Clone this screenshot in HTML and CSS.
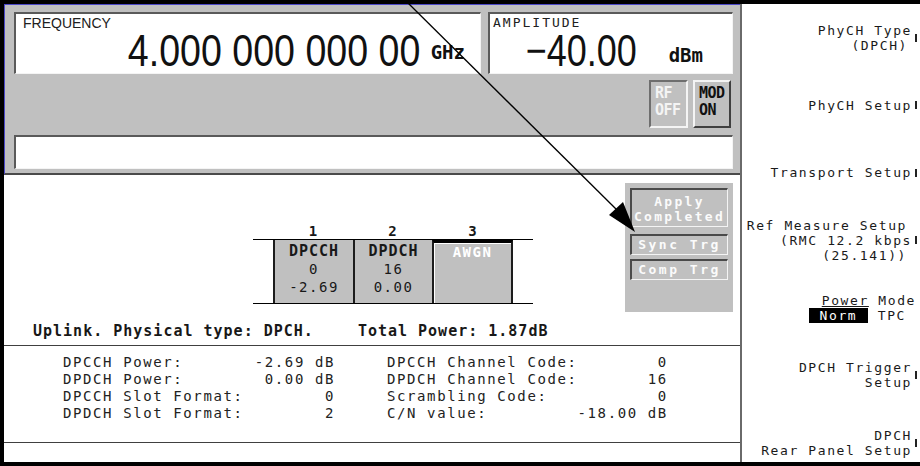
FILE: index.html
```html
<!DOCTYPE html>
<html>
<head>
<meta charset="utf-8">
<link rel="stylesheet" href="styles.css">
</head>
<body>
<div class="screen">
  <div class="main">
    <div class="left">
      <div class="top">
        <div class="readouts">
          <div class="readout freq">
            <div class="rlabel">FREQUENCY</div>
            <div class="rvalue"><span class="num">4.000 000 000 00</span><span class="unit">GHz</span></div>
          </div>
          <div class="readout amp">
            <div class="rlabel rlabel-mono">AMPLITUDE</div>
            <div class="rvalue"><span class="num">&minus;40.00</span><span class="unit">dBm</span></div>
          </div>
        </div>
        <div class="annun">
          <div class="ann ann-off">RF<br>OFF</div>
          <div class="ann ann-on">MOD<br>ON</div>
        </div>
        <div class="msgbar"></div>
      </div>

      <div class="mid">
        <div class="row-a">
          <div class="tablewrap">
            <div class="chtable">
              <div class="nums"><span class="c1">1</span><span class="c2">2</span><span class="c3">3</span></div>
              <div class="boxes">
                <div class="box c1"><b>DPCCH</b><br>0<br>-2.69</div>
                <div class="box c2"><b>DPDCH</b><br>16<br>0.00</div>
                <div class="box c3 box-awgn"><b>AWGN</b></div>
              </div>
            </div>
          </div>
          <div class="apply">
            <div class="btn btn-apply">Apply<br>Completed</div>
            <div class="btn btn-small btn-sync">Sync Trg</div>
            <div class="btn btn-small btn-comp">Comp Trg</div>
          </div>
        </div>
        <div class="uplink"><span>Uplink. Physical type: DPCH.</span><span class="total">Total Power: 1.87dB</span></div>
      </div>

      <div class="info">
        <div class="col col1">
          <span>DPCCH Power:</span><span class="val">-2.69 dB</span>
          <span>DPDCH Power:</span><span class="val">0.00 dB</span>
          <span>DPCCH Slot Format:</span><span class="val">0</span>
          <span>DPDCH Slot Format:</span><span class="val">2</span>
        </div>
        <div class="col col2">
          <span>DPCCH Channel Code:</span><span class="val">0</span>
          <span>DPDCH Channel Code:</span><span class="val">16</span>
          <span>Scrambling Code:</span><span class="val">0</span>
          <span>C/N value:</span><span class="val">-18.00 dB</span>
        </div>
      </div>

      <div class="empty"></div>
    </div>

    <div class="softkeys">
      <div class="sk"><div class="sk-label"><div>PhyCH Type</div><div class="pr4">(DPCH)</div></div><span class="mark"></span></div>
      <div class="sk"><div class="sk-label"><div>PhyCH Setup</div></div><span class="mark"></span></div>
      <div class="sk"><div class="sk-label"><div>Transport Setup</div></div><span class="mark"></span></div>
      <div class="sk"><div class="sk-label"><div class="pr5">Ref Measure Setup</div><div>(RMC 12.2 kbps</div><div class="pr5">(25.141))</div></div><span class="mark"></span></div>
      <div class="sk sk-plain"><div class="sk-label"><div><span class="ul">Power</span> Mode</div><div class="pr10"><span class="hl">Norm</span> TPC</div></div></div>
      <div class="sk"><div class="sk-label"><div>DPCH Trigger</div><div>Setup</div></div><span class="mark"></span></div>
      <div class="sk"><div class="sk-label"><div>DPCH</div><div>Rear Panel Setup</div></div><span class="mark"></span></div>
    </div>
  </div>

  <svg class="arrow" width="920" height="466" viewBox="0 0 920 466">
    <line x1="405" y1="0" x2="617" y2="210" stroke="#000" stroke-width="1.3"/>
    <polygon points="609,215 623,202 635,232" fill="#000"/>
  </svg>
</div>
</body>
</html>
```

FILE: styles.css
```css
* {
  box-sizing: border-box;
  margin: 0;
  padding: 0;
}

html, body {
  width: 920px;
  height: 466px;
  overflow: hidden;
  background: #000;
}

body {
  font-family: "DejaVu Sans Mono", monospace;
  color: #181818;
}

.screen {
  position: relative;
  width: 920px;
  height: 466px;
  background: #000;
  padding: 4px 0 4px 4px;
}

.main {
  display: flex;
  height: 458px;
}

/* ---------- left panel ---------- */
.left {
  width: 736px;
  display: flex;
  flex-direction: column;
  background: #fff;
}

.top {
  height: 171px;
  background: #c0c0c0;
  border-top: 1px solid #4b48c8;
  border-left: 1px solid #4b48c8;
  border-bottom: 2px solid #4a4a4a;
  padding: 7px 7px 0 9px;
  display: flex;
  flex-direction: column;
}

.readouts {
  display: flex;
  gap: 7px;
  height: 62px;
}

.readout {
  background: #fff;
  border-style: solid;
  border-width: 2px 1px 1px 2px;
  border-color: #5a5a5a #f4f4f4 #f4f4f4 #5a5a5a;
  display: flex;
  flex-direction: column;
}

.freq { width: 467px; }
.amp { width: 245px; }

.rlabel {
  font-family: "Liberation Sans", Arial, sans-serif;
  font-size: 14px;
  line-height: 14px;
  height: 16px;
  padding: 2px 0 0 7px;
  color: #202020;
}

.rlabel-mono {
  font-family: "DejaVu Sans Mono", monospace;
  font-size: 13px;
  letter-spacing: 2px;
  padding-left: 3px;
}

.rvalue {
  font-family: "Liberation Sans", Arial, sans-serif;
  font-size: 45px;
  line-height: 42px;
  height: 42px;
  text-align: right;
  white-space: nowrap;
  color: #111;
}

.freq .rvalue { padding-right: 15px; }
.amp .rvalue { padding-right: 29px; }

.num {
  display: inline-block;
  transform-origin: 100% 50%;
}

.freq .num { transform: scaleX(0.835); }
.amp .num { transform: scaleX(0.8); }

.unit {
  font-family: "DejaVu Sans Mono", monospace;
  font-weight: bold;
  font-size: 19px;
  line-height: 1;
}

.freq .unit { margin-left: 10px; vertical-align: 7px; }
.amp .unit { margin-left: 32px; vertical-align: 4px; }

.annun {
  display: flex;
  justify-content: flex-end;
  gap: 5px;
  margin-top: 6px;
  height: 48px;
  padding-right: 2px;
}

.ann {
  width: 39px;
  border: 2px solid;
  font-weight: bold;
  font-size: 15px;
  letter-spacing: -0.5px;
  line-height: 17px;
  padding: 3px 0 0 4px;
}

.ann-off {
  border-color: #6e6e6e #f4f4f4 #f4f4f4 #6e6e6e;
  color: #f4f4f4;
}

.ann-on {
  width: 38px;
  border-color: #f4f4f4 #404040 #404040 #f4f4f4;
  color: #111;
}

.msgbar {
  margin-top: 7px;
  height: 34px;
  background: #fff;
  border-style: solid;
  border-width: 2px 1px 1px 2px;
  border-color: #5a5a5a #f4f4f4 #f4f4f4 #5a5a5a;
}

/* ---------- middle ---------- */
.mid {
  height: 171px;
  border-bottom: 1px solid #404040;
  padding-top: 8px;
}

.row-a {
  display: flex;
  height: 129px;
}

.tablewrap {
  flex: 1;
  padding: 41px 0 0 249px;
}

.chtable { width: 280px; }

.nums {
  display: flex;
  height: 15px;
  padding-left: 20px;
  font-weight: bold;
  font-size: 14px;
  line-height: 15px;
}

.nums span { text-align: center; }

.c1 { width: 80px; }
.c2 { width: 79px; }
.c3 { width: 81px; }

.boxes {
  display: flex;
  height: 65px;
  border-top: 1px solid #000;
  border-bottom: 1px solid #000;
  padding-left: 20px;
}

.box {
  background: #c0c0c0;
  border-left: 2px solid #1c1c1c;
  text-align: center;
  padding-top: 2px;
  font-size: 14px;
  letter-spacing: 1.5px;
  line-height: 18px;
}

.box b {
  font-size: 15px;
  letter-spacing: 1px;
}

.box-awgn {
  border-top: 3px solid #000;
  border-right: 2px solid #1c1c1c;
  box-shadow: inset 1px 1px 0 #fff;
  color: #fff;
  padding-top: 0;
}

.box-awgn b {
  font-size: 14px;
  letter-spacing: 1.5px;
}

.apply {
  width: 108px;
  margin-right: 7px;
  background: #c0c0c0;
  padding: 5px;
}

.btn {
  border-style: solid;
  border-width: 2px 1px 1px 2px;
  border-color: #4a4a4a #f4f4f4 #f4f4f4 #4a4a4a;
  color: #fbfbfb;
  font-weight: bold;
  font-size: 13px;
  letter-spacing: 2.5px;
  text-align: center;
  white-space: nowrap;
}

.btn-apply {
  height: 39px;
  padding-top: 4px;
  line-height: 15px;
  letter-spacing: 2.3px;
}

.btn-small {
  height: 21px;
  line-height: 17px;
}

.btn-sync { margin-top: 7px; }
.btn-comp { margin-top: 4px; }

.uplink {
  margin-top: 10px;
  padding-left: 29px;
  font-weight: bold;
  font-size: 15px;
  letter-spacing: 1px;
  line-height: 18px;
  white-space: nowrap;
}

.total { margin-left: 44px; }

/* ---------- info ---------- */
.info {
  height: 97px;
  border-bottom: 1px solid #404040;
  display: flex;
  padding: 8px 0 0 59px;
  font-size: 14px;
  letter-spacing: 1.6px;
  line-height: 17px;
  white-space: nowrap;
  color: #222;
}

.col {
  display: grid;
  grid-template-columns: 1fr auto;
  align-content: start;
}

.col1 { width: 272px; }
.col2 { width: 260px; margin-left: 52px; }

.val { text-align: right; }

.empty { flex: 1; }

/* ---------- softkeys ---------- */
.softkeys {
  width: 180px;
  border-left: 2px solid #6a6a6a;
  background: #fff;
  overflow: hidden;
  display: flex;
  flex-direction: column;
  font-size: 13px;
  letter-spacing: 1.6px;
  line-height: 15px;
  color: #1a1a1a;
}

.sk {
  flex: 0 0 67.5px;
  display: flex;
  justify-content: flex-end;
  align-items: center;
  padding-right: 3px;
}

.sk-plain { padding-right: 4px; }

.sk-label {
  text-align: right;
  white-space: nowrap;
}

.mark {
  width: 2px;
  height: 8px;
  background: #222;
  margin-left: 3px;
  flex: none;
}

.pr4 { padding-right: 4px; }
.pr5 { padding-right: 5px; }
.pr10 { padding-right: 10px; }

.ul { text-decoration: underline; }

.hl {
  display: inline-block;
  background: #000;
  color: #fff;
  padding: 0 11px;
  line-height: 15px;
}

/* ---------- annotation arrow ---------- */
.arrow {
  position: absolute;
  left: 0;
  top: 0;
  pointer-events: none;
}
```
